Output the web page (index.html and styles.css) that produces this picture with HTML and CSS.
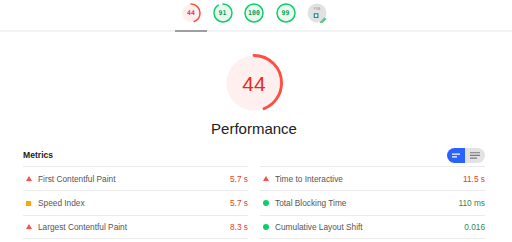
FILE: index.html
```html
<!DOCTYPE html>
<html lang="en">
<head>
  <meta charset="UTF-8" />
  <title>Lighthouse Report</title>
  <link rel="stylesheet" href="styles.css">
</head>
<body>

  <!-- sticky score header -->
  <div class="topbar">
    <div class="tabs">
      <div class="tab active">
        <div class="mini">
          <svg viewBox="0 0 120 120">
            <circle cx="60" cy="60" r="54" fill="#fff0ef" />
            <circle cx="60" cy="60" r="54" fill="none" stroke="#ff4e42" stroke-width="9" stroke-linecap="round" stroke-dasharray="149.3 339.3" transform="rotate(-90 60 60)" />
          </svg>
          <span class="mini-value fail">44</span>
        </div>
      </div>
      <div class="tab">
        <div class="mini">
          <svg viewBox="0 0 120 120">
            <circle cx="60" cy="60" r="54" fill="#e9f9f0" />
            <circle cx="60" cy="60" r="54" fill="none" stroke="#0cce6b" stroke-width="9" stroke-linecap="round" stroke-dasharray="308.7 339.3" transform="rotate(-90 60 60)" />
          </svg>
          <span class="mini-value pass">91</span>
        </div>
      </div>
      <div class="tab">
        <div class="mini">
          <svg viewBox="0 0 120 120">
            <circle cx="60" cy="60" r="54" fill="#e9f9f0" stroke="#0cce6b" stroke-width="9" />
          </svg>
          <span class="mini-value pass">100</span>
        </div>
      </div>
      <div class="tab">
        <div class="mini">
          <svg viewBox="0 0 120 120">
            <circle cx="60" cy="60" r="54" fill="#e9f9f0" />
            <circle cx="60" cy="60" r="54" fill="none" stroke="#0cce6b" stroke-width="9" stroke-linecap="round" stroke-dasharray="335.9 339.3" transform="rotate(-90 60 60)" />
          </svg>
          <span class="mini-value pass">99</span>
        </div>
      </div>
      <div class="tab">
        <div class="mini">
          <svg viewBox="0 0 20 20">
            <circle cx="10" cy="10" r="9.5" fill="#e2e2e2" />
            <text x="10" y="7.2" font-size="3" text-anchor="middle" fill="#9a9a9a" font-family="Liberation Sans, sans-serif">PWA</text>
            <rect x="7.3" y="10.8" width="3.6" height="3.6" fill="#fff" stroke="#0b8b88" stroke-width="1.1" />
            <path d="M12.5 19.2 L17.6 14.2 L19.6 16 L14.6 21 Z" fill="#5fc98a" />
          </svg>
        </div>
      </div>
    </div>
  </div>

  <!-- main gauge -->
  <div class="hero">
    <div class="gauge">
      <svg viewBox="0 0 120 120">
        <circle cx="60" cy="60" r="57" fill="#fff0ef" />
        <circle cx="60" cy="60" r="57" fill="none" stroke="#ff4e42" stroke-width="6" stroke-linecap="round" stroke-dasharray="157.6 358.1" transform="rotate(-90 60 60)" />
      </svg>
      <span class="gauge-value">44</span>
    </div>
    <div class="hero-title">Performance</div>
  </div>

  <!-- metrics -->
  <div class="metrics">
    <div class="metrics-head">
      <div class="metrics-title">Metrics</div>
      <div class="toggle">
        <div class="toggle-half toggle-on">
          <svg width="18" height="15" viewBox="0 0 18 15">
            <path d="M5 6.2 H13 M5 8.8 H10" stroke="#fff" stroke-width="1.2" />
          </svg>
        </div>
        <div class="toggle-half toggle-off">
          <svg width="20" height="15" viewBox="0 0 20 15">
            <path d="M5 4.7 H15 M5 7.4 H15 M5 10.1 H12" stroke="#7a7a7a" stroke-width="1.1" />
          </svg>
        </div>
      </div>
    </div>

    <div class="metric-grid">
      <div class="metric">
        <span class="icon icon-fail"></span>
        <span class="metric-label">First Contentful Paint</span>
        <span class="metric-value fail">5.7 s</span>
      </div>
      <div class="metric">
        <span class="icon icon-fail"></span>
        <span class="metric-label">Time to Interactive</span>
        <span class="metric-value fail">11.5 s</span>
      </div>
      <div class="metric">
        <span class="icon icon-avg"></span>
        <span class="metric-label">Speed Index</span>
        <span class="metric-value avg">5.7 s</span>
      </div>
      <div class="metric">
        <span class="icon icon-pass"></span>
        <span class="metric-label">Total Blocking Time</span>
        <span class="metric-value pass">110 ms</span>
      </div>
      <div class="metric">
        <span class="icon icon-fail"></span>
        <span class="metric-label">Largest Contentful Paint</span>
        <span class="metric-value fail">8.3 s</span>
      </div>
      <div class="metric">
        <span class="icon icon-pass"></span>
        <span class="metric-label">Cumulative Layout Shift</span>
        <span class="metric-value pass">0.016</span>
      </div>
    </div>
  </div>

</body>
</html>
```

FILE: styles.css
```css
/* base */
* {
  box-sizing: border-box;
}
body {
  margin: 0;
  background: #fff;
  font-family: "Liberation Sans", Arial, sans-serif;
  color: #212121;
}

/* score header */
.topbar {
  padding: 0 27px 0 23px;
  border-bottom: 2px solid #f3f3f3;
}
.tabs {
  display: flex;
  justify-content: center;
  height: 30px;
}
.tab {
  width: 31.5px;
  height: 30px;
  display: flex;
  justify-content: center;
  padding-top: 3px;
}
.tab.active {
  height: 32px;
  border-bottom: 2px solid #9e9e9e;
}
.mini {
  display: grid;
  width: 20px;
  height: 20px;
}
.mini > * {
  grid-area: 1 / 1;
}
.mini svg {
  width: 20px;
  height: 20px;
  display: block;
}
.mini-value {
  place-self: center;
  font-family: "DejaVu Sans Mono", "Liberation Mono", monospace;
  font-size: 6.6px;
  font-weight: bold;
  line-height: 1;
}

/* big gauge */
.hero {
  display: flex;
  flex-direction: column;
  align-items: center;
  padding: 22px 27px 0 23px;
}
.gauge {
  display: grid;
  width: 58px;
  height: 58px;
}
.gauge > * {
  grid-area: 1 / 1;
}
.gauge svg {
  width: 58px;
  height: 58px;
  display: block;
}
.gauge-value {
  place-self: center;
  font-size: 21px;
  line-height: 1;
  color: #eb2a1c;
}
.hero-title {
  margin-top: 8px;
  font-size: 15px;
  line-height: 18px;
  color: #212121;
}

/* metrics */
.metrics {
  padding: 10px 27px 0 23px;
}
.metrics-head {
  display: flex;
  justify-content: space-between;
  align-items: flex-start;
  height: 18px;
}
.metrics-title {
  font-size: 8.6px;
  font-weight: bold;
  line-height: 15px;
}
.toggle {
  display: flex;
  width: 38px;
  height: 15px;
  border-radius: 8px;
  overflow: hidden;
}
.toggle-half svg {
  display: block;
}
.toggle-on {
  width: 18px;
  background: #2962ff;
}
.toggle-off {
  width: 20px;
  background: #e2e2e2;
}

.metric-grid {
  display: grid;
  grid-template-columns: 1fr 1fr;
  column-gap: 12px;
}
.metric {
  display: flex;
  align-items: center;
  height: 24.4px;
  border-top: 1px solid #ebebeb;
  font-size: 8.3px;
}
.metric:nth-last-child(-n+2) {
  border-bottom: 1px solid #ebebeb;
}
.metric-label {
  flex: 1;
  color: #555;
}

/* status icons */
.icon {
  flex: none;
  margin: 0 6px 0 3px;
}
.icon-fail {
  width: 0;
  height: 0;
  border-left: 3px solid transparent;
  border-right: 3px solid transparent;
  border-bottom: 5px solid #ff4e42;
}
.icon-avg {
  width: 5px;
  height: 5px;
  margin-right: 7px;
  background: #ffa400;
}
.icon-pass {
  width: 6px;
  height: 6px;
  border-radius: 50%;
  background: #0cce6b;
}

.fail {
  color: #f0392b;
}
.avg {
  color: #d9472b;
}
.pass {
  color: #2e8a55;
}
.mini-value.pass {
  color: #0a9d4f;
}
```
